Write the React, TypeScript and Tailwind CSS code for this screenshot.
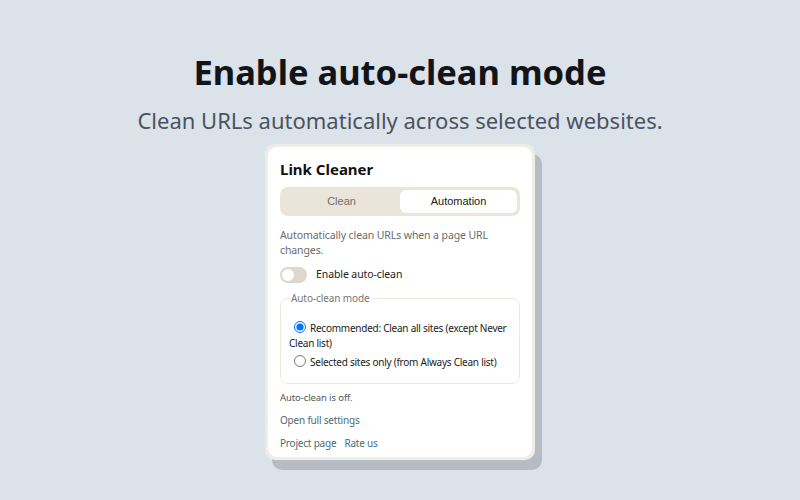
import React from "react";

const sans = { fontFamily: '"Noto Sans", "Open Sans", sans-serif' };
const arial = { fontFamily: '"Liberation Sans", Arial, sans-serif' };

export default function App() {
  return (
    <div
      className="w-[800px] h-[500px] bg-[#dce2ea] flex flex-col items-center overflow-hidden"
      style={sans}
    >
      <h1 className="mt-[48px] text-[34.5px] leading-[48px] font-bold text-[#111418]">
        Enable auto-clean mode
      </h1>
      <p className="mt-[9px] text-[22px] leading-[30px] text-[#4b5360]">
        Clean URLs automatically across selected websites.
      </p>

      {/* Popup card */}
      <div className="mt-[9px] w-[270px] rounded-[10px] bg-[#eeeee6] p-[3px] shadow-[7px_10px_0_#b7bbc3]">
        <div className="rounded-[9px] bg-white px-[12px] pt-[12px] pb-[6px]">
          <div className="text-[15px] leading-[20px] font-bold text-[#111]">Link Cleaner</div>

          <div className="mt-[8px] flex h-[29px] rounded-[8px] bg-[#ebe5d9] p-[3px]">
            <button className="flex-1 rounded-[6px] text-[11px] text-[#6f6f6f]" style={arial}>
              Clean
            </button>
            <button className="flex-1 rounded-[6px] bg-white text-[11px] text-[#1a1a1a]" style={arial}>
              Automation
            </button>
          </div>

          <p className="mt-[12px] text-[10.5px] leading-[15px] tracking-[-0.1px] text-[#6b6b6b]">
            Automatically clean URLs when a page URL changes.
          </p>

          <div className="mt-[9px] flex items-center gap-[9px]">
            <div className="h-[16px] w-[27px] rounded-full bg-[#ddd8cf] p-[2px]">
              <div className="h-[12px] w-[12px] rounded-full bg-white" />
            </div>
            <span className="text-[10.5px] tracking-[-0.1px] text-[#222]">Enable auto-clean</span>
          </div>

          <fieldset className="mt-[8px] rounded-[8px] border border-[#ebe8e2] px-[8px] pt-[16px] pb-[13px]">
            <legend className="px-[2px] text-[10px] leading-[14px] tracking-[-0.1px] text-[#777]">
              Auto-clean mode
            </legend>
            <label className="block text-[10px] leading-[15px] tracking-[-0.25px] text-[#222]">
              <input
                type="radio"
                name="mode"
                defaultChecked
                className="ml-[5px] mr-[4px] h-[12px] w-[12px] align-[-1px]"
              />
              Recommended: Clean all sites (except Never Clean list)
            </label>
            <label className="mt-[4px] block text-[10px] leading-[15px] tracking-[-0.25px] text-[#222]">
              <input
                type="radio"
                name="mode"
                className="ml-[5px] mr-[4px] h-[12px] w-[12px] align-[-1px]"
              />
              Selected sites only (from Always Clean list)
            </label>
          </fieldset>

          <p className="mt-[7px] text-[9.5px] leading-[14px] tracking-[-0.1px] text-[#555]">Auto-clean is off.</p>

          <div className="mt-[8px] text-[10px] leading-[15px] tracking-[-0.2px] text-[#4d6b74]">Open full settings</div>

          <div className="mt-[8px] flex gap-[8px] text-[10px] leading-[15px] tracking-[-0.2px] text-[#4d6b74]">
            <span>Project page</span>
            <span>Rate us</span>
          </div>
        </div>
      </div>
    </div>
  );
}
